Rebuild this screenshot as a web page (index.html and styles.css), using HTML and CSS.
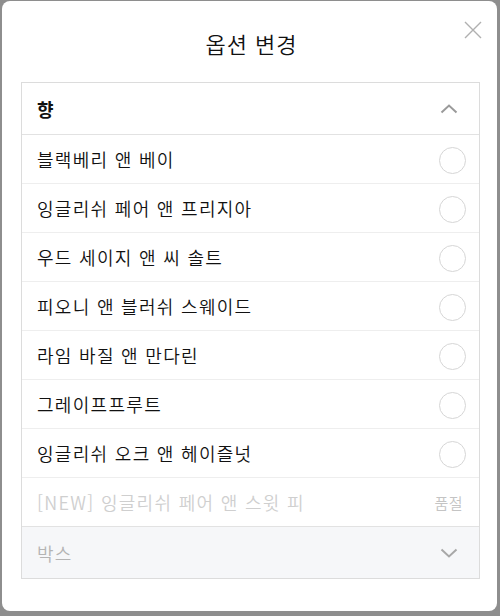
FILE: index.html
```html
<!DOCTYPE html>
<html lang="ko">
<head>
<meta charset="utf-8">
<link rel="stylesheet" href="styles.css">
</head>
<body>
<div class="modal">
  <button class="close" aria-label="닫기">
    <svg width="18" height="18" viewBox="0 0 18 18"><path d="M1 1L17 17M17 1L1 17" stroke="#b0b0b0" stroke-width="1.4" fill="none"/></svg>
  </button>
  <h1 class="title">옵션 변경</h1>
  <div class="options">
    <div class="group-head">
      <span class="group-name">향</span>
      <svg class="chev" width="18" height="10" viewBox="0 0 18 10"><path d="M1.5 8.5L9 1.5L16.5 8.5" stroke="#9a9a9a" stroke-width="2" fill="none"/></svg>
    </div>
    <div class="row"><span>블랙베리 앤 베이</span><i class="radio"></i></div>
    <div class="row"><span>잉글리쉬 페어 앤 프리지아</span><i class="radio"></i></div>
    <div class="row"><span>우드 세이지 앤 씨 솔트</span><i class="radio"></i></div>
    <div class="row"><span>피오니 앤 블러쉬 스웨이드</span><i class="radio"></i></div>
    <div class="row"><span>라임 바질 앤 만다린</span><i class="radio"></i></div>
    <div class="row"><span>그레이프프루트</span><i class="radio"></i></div>
    <div class="row"><span>잉글리쉬 오크 앤 헤이즐넛</span><i class="radio"></i></div>
    <div class="row soldout"><span>[NEW] 잉글리쉬 페어 앤 스윗 피</span><em class="tag">품절</em></div>
    <div class="group-head closed">
      <span class="group-name">박스</span>
      <svg class="chev" width="18" height="10" viewBox="0 0 18 10"><path d="M1.5 1.5L9 8.5L16.5 1.5" stroke="#a8a8a8" stroke-width="2" fill="none"/></svg>
    </div>
  </div>
</div>
</body>
</html>
```
FILE: styles.css
```css
* { box-sizing: border-box; }
html, body { margin: 0; padding: 0; }
body {
  background: #8e8e8e;
  width: 500px;
  height: 616px;
  overflow: hidden;
  font-family: "Noto Sans CJK KR", "Noto Sans", sans-serif;
}
.modal {
  position: relative;
  margin: 1px 3px 0 2px;
  height: 610px;
  background: #fff;
  border-radius: 8px;
  padding: 0 17px 0 19px;
}
.close {
  position: absolute;
  top: 20px;
  right: 15px;
  width: 18px;
  height: 18px;
  padding: 0;
  border: 0;
  background: none;
  display: block;
}
.close svg { display: block; }
.title {
  margin: 0;
  padding-top: 27px;
  height: 81px;
  font-size: 22px;
  line-height: 30px;
  font-weight: 350;
  letter-spacing: 1px;
  text-align: center;
  color: #111;
  padding-left: 2px;
}
.options {
  border: 1px solid #dcdcdc;
}
.group-head {
  display: flex;
  align-items: center;
  justify-content: space-between;
  height: 52px;
  padding: 0 21px 0 15px;
  border-bottom: 1px solid #e2e2e2;
}
.group-name {
  font-size: 18px;
  font-weight: 700;
  color: #111;
}
.chev { display: block; }
.group-head.closed {
  background: #f6f7f9;
  border-bottom: 0;
  height: 51px;
}
.group-head.closed .group-name {
  font-weight: 350;
  color: #b4b4b4;
  letter-spacing: 1.3px;
}
.row {
  display: flex;
  align-items: center;
  justify-content: space-between;
  height: 49px;
  padding: 0 13px 0 15px;
  border-bottom: 1px solid #eeeeee;
  font-size: 18px;
  font-weight: 350;
  letter-spacing: 1.3px;
  color: #111;
}
.row.soldout { border-bottom: 1px solid #e2e2e2; }
.radio {
  display: block;
  width: 27px;
  height: 27px;
  border: 1.5px solid #d6d6d6;
  border-radius: 50%;
  margin-top: 2px;
}
.soldout span { color: #cfcfcf; }
.tag {
  font-style: normal;
  font-size: 15px;
  letter-spacing: 0.5px;
  color: #c4c4c4;
  padding-right: 3px;
}
```
